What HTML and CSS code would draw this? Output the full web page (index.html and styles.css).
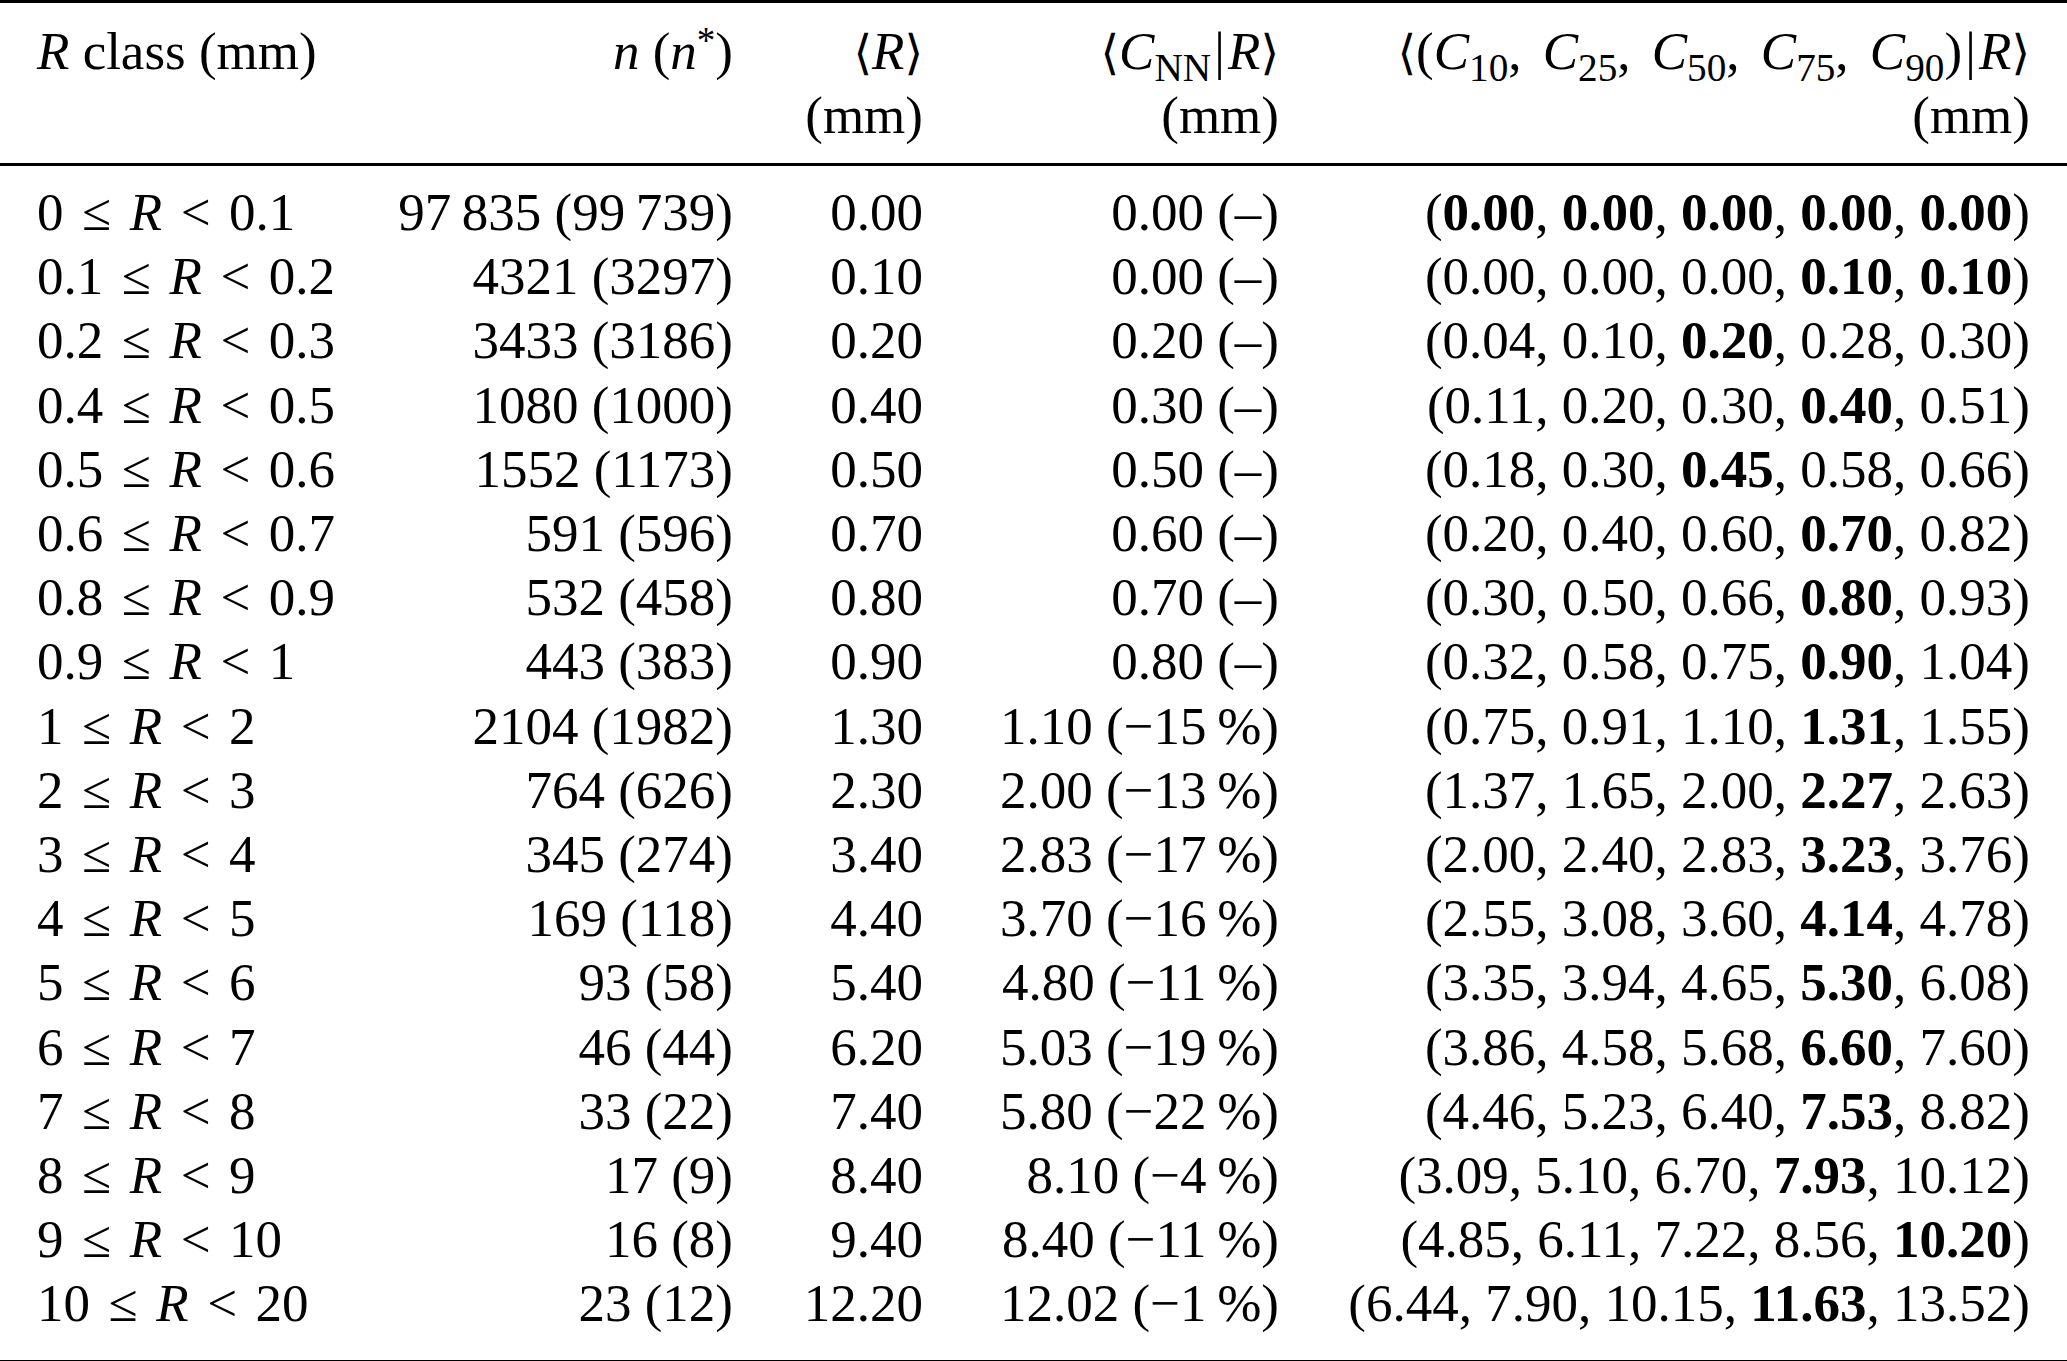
FILE: index.html
```html
<!DOCTYPE html>
<html lang="en">
<head>
<meta charset="utf-8">
<title>R class table</title>
<link rel="stylesheet" href="styles.css">
</head>
<body>
<table class="data">
  <colgroup>
    <col class="c1"><col class="c2"><col class="c3"><col class="c4"><col class="c5">
  </colgroup>
  <thead>
    <tr>
      <th class="first"><i>R</i> class (mm)</th>
      <th><i>n</i> (<i>n</i><sup>*</sup>)</th>
      <th><span class="ang">⟨</span><i>R</i><span class="ang">⟩</span><br>(mm)</th>
      <th><span class="ang">⟨</span><i>C</i><sub>NN</sub><span class="bar">|</span><i>R</i><span class="ang">⟩</span><br>(mm)</th>
      <th class="last wide"><span class="ang">⟨</span>(<i>C</i><sub>10</sub>, <i>C</i><sub>25</sub>, <i>C</i><sub>50</sub>, <i>C</i><sub>75</sub>, <i>C</i><sub>90</sub>)<span class="bar">|</span><i>R</i><span class="ang">⟩</span><br>(mm)</th>
    </tr>
  </thead>
  <tbody>
    <tr class="top"><td class="first rng">0 ≤ <i>R</i> &lt; 0.1</td><td>97&#8201;835 (99&#8201;739)</td><td>0.00</td><td>0.00 (–)</td><td class="last">(<b>0.00</b>, <b>0.00</b>, <b>0.00</b>, <b>0.00</b>, <b>0.00</b>)</td></tr>
    <tr><td class="first rng">0.1 ≤ <i>R</i> &lt; 0.2</td><td>4321 (3297)</td><td>0.10</td><td>0.00 (–)</td><td class="last">(0.00, 0.00, 0.00, <b>0.10</b>, <b>0.10</b>)</td></tr>
    <tr><td class="first rng">0.2 ≤ <i>R</i> &lt; 0.3</td><td>3433 (3186)</td><td>0.20</td><td>0.20 (–)</td><td class="last">(0.04, 0.10, <b>0.20</b>, 0.28, 0.30)</td></tr>
    <tr><td class="first rng">0.4 ≤ <i>R</i> &lt; 0.5</td><td>1080 (1000)</td><td>0.40</td><td>0.30 (–)</td><td class="last">(0.11, 0.20, 0.30, <b>0.40</b>, 0.51)</td></tr>
    <tr><td class="first rng">0.5 ≤ <i>R</i> &lt; 0.6</td><td>1552 (1173)</td><td>0.50</td><td>0.50 (–)</td><td class="last">(0.18, 0.30, <b>0.45</b>, 0.58, 0.66)</td></tr>
    <tr><td class="first rng">0.6 ≤ <i>R</i> &lt; 0.7</td><td>591 (596)</td><td>0.70</td><td>0.60 (–)</td><td class="last">(0.20, 0.40, 0.60, <b>0.70</b>, 0.82)</td></tr>
    <tr><td class="first rng">0.8 ≤ <i>R</i> &lt; 0.9</td><td>532 (458)</td><td>0.80</td><td>0.70 (–)</td><td class="last">(0.30, 0.50, 0.66, <b>0.80</b>, 0.93)</td></tr>
    <tr><td class="first rng">0.9 ≤ <i>R</i> &lt; 1</td><td>443 (383)</td><td>0.90</td><td>0.80 (–)</td><td class="last">(0.32, 0.58, 0.75, <b>0.90</b>, 1.04)</td></tr>
    <tr><td class="first rng">1 ≤ <i>R</i> &lt; 2</td><td>2104 (1982)</td><td>1.30</td><td>1.10 (−15&#8201;%)</td><td class="last">(0.75, 0.91, 1.10, <b>1.31</b>, 1.55)</td></tr>
    <tr><td class="first rng">2 ≤ <i>R</i> &lt; 3</td><td>764 (626)</td><td>2.30</td><td>2.00 (−13&#8201;%)</td><td class="last">(1.37, 1.65, 2.00, <b>2.27</b>, 2.63)</td></tr>
    <tr><td class="first rng">3 ≤ <i>R</i> &lt; 4</td><td>345 (274)</td><td>3.40</td><td>2.83 (−17&#8201;%)</td><td class="last">(2.00, 2.40, 2.83, <b>3.23</b>, 3.76)</td></tr>
    <tr><td class="first rng">4 ≤ <i>R</i> &lt; 5</td><td>169 (118)</td><td>4.40</td><td>3.70 (−16&#8201;%)</td><td class="last">(2.55, 3.08, 3.60, <b>4.14</b>, 4.78)</td></tr>
    <tr><td class="first rng">5 ≤ <i>R</i> &lt; 6</td><td>93 (58)</td><td>5.40</td><td>4.80 (−11&#8201;%)</td><td class="last">(3.35, 3.94, 4.65, <b>5.30</b>, 6.08)</td></tr>
    <tr><td class="first rng">6 ≤ <i>R</i> &lt; 7</td><td>46 (44)</td><td>6.20</td><td>5.03 (−19&#8201;%)</td><td class="last">(3.86, 4.58, 5.68, <b>6.60</b>, 7.60)</td></tr>
    <tr><td class="first rng">7 ≤ <i>R</i> &lt; 8</td><td>33 (22)</td><td>7.40</td><td>5.80 (−22&#8201;%)</td><td class="last">(4.46, 5.23, 6.40, <b>7.53</b>, 8.82)</td></tr>
    <tr><td class="first rng">8 ≤ <i>R</i> &lt; 9</td><td>17 (9)</td><td>8.40</td><td>8.10 (−4&#8201;%)</td><td class="last">(3.09, 5.10, 6.70, <b>7.93</b>, 10.12)</td></tr>
    <tr><td class="first rng">9 ≤ <i>R</i> &lt; 10</td><td>16 (8)</td><td>9.40</td><td>8.40 (−11&#8201;%)</td><td class="last">(4.85, 6.11, 7.22, 8.56, <b>10.20</b>)</td></tr>
    <tr class="bottom"><td class="first rng">10 ≤ <i>R</i> &lt; 20</td><td>23 (12)</td><td>12.20</td><td>12.02 (−1&#8201;%)</td><td class="last">(6.44, 7.90, 10.15, <b>11.63</b>, 13.52)</td></tr>
  </tbody>
</table>
</body>
</html>
```

FILE: styles.css
```css
html, body {
  margin: 0;
  padding: 0;
  background: #ffffff;
}

body {
  color: #000000;
  font-family: "Liberation Serif", "Times New Roman", "DejaVu Serif", serif;
  font-size: 53px;
}

.data {
  width: 2067px;
  border-collapse: collapse;
  table-layout: fixed;
}

.c1 { width: 380px; }
.c2 { width: 353px; }
.c3 { width: 190px; }
.c4 { width: 356px; }
.c5 { width: 788px; }

.data thead tr {
  border-top: 3px solid #000000;
  border-bottom: 3px solid #000000;
}

.data th {
  font-weight: normal;
  text-align: right;
  vertical-align: top;
  line-height: 62px;
  padding: 17px 0 17px 0;
  white-space: nowrap;
}

.data td {
  text-align: right;
  line-height: 64.2px;
  padding: 0;
  white-space: nowrap;
}

.data th.first,
.data td.first {
  text-align: left;
  padding-left: 37px;
}

.data th.last,
.data td.last {
  padding-right: 37px;
}

.data th.wide {
  word-spacing: 0.15em;
}

.data tr.top td {
  padding-top: 14px;
}

.data tr.bottom {
  border-bottom: 3px solid #000000;
}

.data tr.bottom td {
  padding-bottom: 24px;
}

.rng {
  word-spacing: 0.1em;
}

.ang {
  font-family: "DejaVu Serif", "Liberation Serif", serif;
  font-weight: normal;
  font-size: 0.9em;
}

.bar {
  margin: 0 0.06em;
}

sub {
  font-size: 0.74em;
  line-height: 0;
  vertical-align: -0.3em;
}

sup {
  font-size: 0.7em;
  line-height: 0;
  vertical-align: 0.42em;
}

b {
  font-weight: bold;
}
```
